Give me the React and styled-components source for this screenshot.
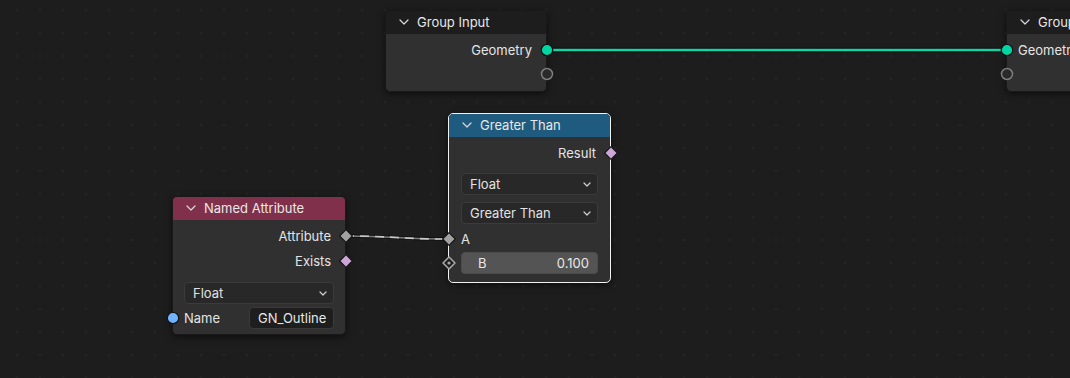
import React from "react";
import styled, { createGlobalStyle } from "styled-components";

const Global = createGlobalStyle`
  html, body { margin: 0; padding: 0; background: #1d1d1d; }
  body { font-family: Inter, "Noto Sans", "DejaVu Sans", sans-serif; }
`;

const Canvas = styled.div`
  position: relative;
  width: 1070px;
  height: 378px;
  overflow: hidden;
  background-color: #1d1d1d;
  background-image: radial-gradient(circle, #282828 0.9px, transparent 1.3px);
  background-size: 23px 23px;
  background-position: 5.5px 21.5px;
`;

const Wires = styled.svg`
  position: absolute;
  left: 0;
  top: 0;
  z-index: 0;
  pointer-events: none;
`;

const Node = styled.div`
  position: absolute;
  z-index: 1;
  left: ${(p) => p.$x}px;
  top: ${(p) => p.$y}px;
  width: ${(p) => p.$w}px;
  height: ${(p) => p.$h}px;
  box-sizing: border-box;
  background: #303030;
  border: 1px solid ${(p) => (p.$selected ? "#f2f2f2" : "#191919")};
  border-radius: 5px;
  box-shadow: 0 2px 7px rgba(0, 0, 0, 0.55);
  display: flex;
  flex-direction: column;
  color: #e4e4e4;
  font-size: 13px;
`;

const Header = styled.div`
  height: 23px;
  flex: none;
  display: flex;
  align-items: center;
  gap: 8px;
  padding-left: 13px;
  padding-bottom: 1px;
  box-sizing: border-box;
  background: ${(p) => p.$color};
  border-radius: 4px 4px 0 0;
  color: #e8e8e8;
  font-size: 13px;
  white-space: nowrap;
  overflow: hidden;
`;

const Body = styled.div`
  display: flex;
  flex-direction: column;
  padding-top: ${(p) => p.$pt || 0}px;
`;

const Row = styled.div`
  position: relative;
  height: 22px;
  flex: none;
  margin-top: ${(p) => p.$mt || 0}px;
  display: flex;
  align-items: center;
  justify-content: ${(p) => (p.$right ? "flex-end" : "flex-start")};
  padding: 0 ${(p) => (p.$px != null ? p.$px : 14)}px;
  white-space: nowrap;
`;

const Label = styled.span`
  line-height: 22px;
`;

const SocketBox = styled.svg`
  position: absolute;
  z-index: 2;
  display: block;
  top: 50%;
  width: ${(p) => p.$s}px;
  height: ${(p) => p.$s}px;
  margin-top: ${(p) => -p.$s / 2}px;
  left: ${(p) => (p.$side === "right" ? `calc(100% + 0.5px - ${p.$s / 2}px)` : `${-0.5 - p.$s / 2}px`)};
  overflow: visible;
`;

const Socket = ({ kind, side, color, size = 16 }) => {
  let shape;
  if (kind === "circle") {
    shape = <circle cx="7" cy="7" r="5" fill={color} stroke="#141414" strokeWidth="1.1" />;
  } else if (kind === "hollow") {
    shape = <circle cx="7" cy="7" r="4.8" fill="#2a2a2a" stroke="#7e7e7e" strokeWidth="1.3" />;
  } else if (kind === "diamond") {
    shape = <path d="M7 1.4 L12.6 7 L7 12.6 L1.4 7 Z" fill={color} stroke="#141414" strokeWidth="1" strokeLinejoin="round" />;
  } else {
    shape = (
      <g>
        <path d="M7 1.8 L12.2 7 L7 12.2 L1.8 7 Z" fill="#1e1e1e" stroke="#a6a6a6" strokeWidth="1.4" strokeLinejoin="round" />
        <circle cx="7" cy="7" r="1.4" fill="#a6a6a6" />
      </g>
    );
  }
  return (
    <SocketBox $side={side} $s={size} viewBox="0 0 14 14">
      {shape}
    </SocketBox>
  );
};

const Dropdown = styled.div`
  flex: 1;
  height: 22px;
  box-sizing: border-box;
  border-radius: 4px;
  background: #282828;
  border: 1px solid #3b3b3b;
  display: flex;
  align-items: center;
  justify-content: space-between;
  padding: 0 6px 0 8px;
  color: #e2e2e2;
`;

const NumberField = styled.div`
  flex: 1;
  height: 22px;
  box-sizing: border-box;
  border-radius: 4px;
  background: #545454;
  border: 1px solid #4c4c4c;
  display: flex;
  align-items: center;
  justify-content: space-between;
  padding: 0 8px 0 16px;
  color: #e8e8e8;
`;

const TextField = styled.div`
  margin-left: auto;
  width: ${(p) => p.$w}px;
  height: 22px;
  box-sizing: border-box;
  border-radius: 4px;
  background: #1e1e1e;
  border: 1px solid #3a3a3a;
  display: flex;
  align-items: center;
  padding-left: 8px;
  color: #e6e6e6;
`;

const Chevron = () => (
  <svg width="10" height="6" viewBox="0 0 10 6">
    <path d="M1 1 L5 5 L9 1" fill="none" stroke="#d8d8d8" strokeWidth="1.2" strokeLinecap="round" strokeLinejoin="round" />
  </svg>
);

const SmallChevron = () => (
  <svg width="8" height="5" viewBox="0 0 8 5">
    <path d="M1 1 L4 4 L7 1" fill="none" stroke="#d0d0d0" strokeWidth="1.2" strokeLinecap="round" strokeLinejoin="round" />
  </svg>
);

export default function App() {
  return (
    <>
      <Global />
      <Canvas>
        <Wires width="1070" height="378" viewBox="0 0 1070 378">
          <path d="M546 50 L1006 50" stroke="#0e0e0e" strokeWidth="4.6" fill="none" />
          <path d="M546 50 L1006 50" stroke="#14d4a2" strokeWidth="2.6" fill="none" />
          <path d="M345 236 C 396 236, 397 239, 448 239" stroke="#111" strokeWidth="3.4" fill="none" />
          <path d="M345 236 C 396 236, 397 239, 448 239" stroke="#7c7c7c" strokeWidth="1.6" fill="none" />
          <path d="M345 236 C 396 236, 397 239, 448 239" stroke="#c8c8c8" strokeWidth="1.6" strokeDasharray="9 6" fill="none" />
        </Wires>

        <Node $x={385} $y={10} $w={162} $h={82}>
          <Header $color="#1d1d1d">
            <Chevron />
            Group Input
          </Header>
          <Body $pt={5}>
            <Row $right>
              <Label>Geometry</Label>
              <Socket kind="circle" side="right" color="#00d6a3" />
            </Row>
            <Row $mt={2}>
              <Socket kind="hollow" side="right" />
            </Row>
          </Body>
        </Node>

        <Node $x={1006} $y={10} $w={160} $h={82}>
          <Header $color="#1d1d1d">
            <Chevron />
            Group Output
          </Header>
          <Body $pt={5}>
            <Row $px={11}>
              <Label>Geometry</Label>
              <Socket kind="circle" side="left" color="#00d6a3" />
            </Row>
            <Row $mt={2}>
              <Socket kind="hollow" side="left" />
            </Row>
          </Body>
        </Node>

        <Node $x={448} $y={113} $w={163} $h={170} $selected>
          <Header $color="#1f5b7e">
            <Chevron />
            Greater Than
          </Header>
          <Body $pt={5}>
            <Row $right>
              <Label>Result</Label>
              <Socket kind="diamond" side="right" color="#cca6d6" />
            </Row>
            <Row $mt={9} $px={12}>
              <Dropdown>
                Float
                <SmallChevron />
              </Dropdown>
            </Row>
            <Row $mt={7} $px={12}>
              <Dropdown>
                Greater Than
                <SmallChevron />
              </Dropdown>
            </Row>
            <Row $mt={4} $px={12}>
              <Label>A</Label>
              <Socket kind="diamond" side="left" color="#a1a1a1" />
            </Row>
            <Row $mt={2} $px={12}>
              <NumberField>
                <span>B</span>
                <span>0.100</span>
              </NumberField>
              <Socket kind="field" side="left" />
            </Row>
          </Body>
        </Node>

        <Node $x={172} $y={196} $w={174} $h={139}>
          <Header $color="#80304a">
            <Chevron />
            Named Attribute
          </Header>
          <Body $pt={5}>
            <Row $right>
              <Label>Attribute</Label>
              <Socket kind="diamond" side="right" color="#a1a1a1" />
            </Row>
            <Row $right $mt={3}>
              <Label>Exists</Label>
              <Socket kind="diamond" side="right" color="#cca6d6" />
            </Row>
            <Row $mt={10} $px={11}>
              <Dropdown>
                Float
                <SmallChevron />
              </Dropdown>
            </Row>
            <Row $mt={3} $px={11}>
              <Label>Name</Label>
              <TextField $w={85}>GN_Outline</TextField>
              <Socket kind="circle" side="left" color="#70b2ff" />
            </Row>
          </Body>
        </Node>
      </Canvas>
    </>
  );
}
